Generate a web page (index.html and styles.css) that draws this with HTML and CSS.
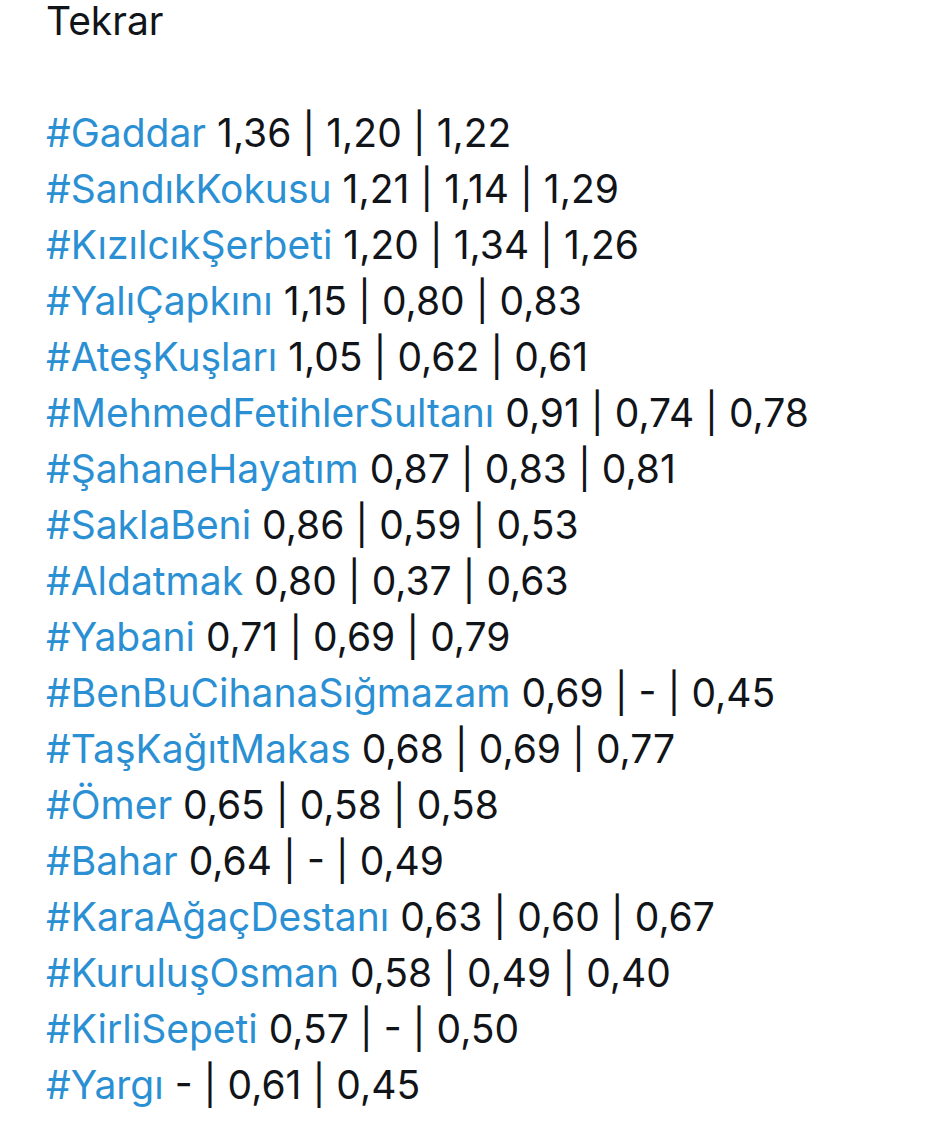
FILE: index.html
```html
<!DOCTYPE html>
<html lang="tr">
<head>
<meta charset="utf-8">
<link rel="stylesheet" href="styles.css">
</head>
<body>
<div class="tweet">
  <div class="line title">Tekrar</div>
  <div class="line blank">&nbsp;</div>
  <div class="line"><span class="tag">#Gaddar</span> 1,36 | 1,20 | 1,22</div>
  <div class="line"><span class="tag">#SandıkKokusu</span> 1,21 | 1,14 | 1,29</div>
  <div class="line"><span class="tag">#KızılcıkŞerbeti</span> 1,20 | 1,34 | 1,26</div>
  <div class="line"><span class="tag">#YalıÇapkını</span> 1,15 | 0,80 | 0,83</div>
  <div class="line"><span class="tag">#AteşKuşları</span> 1,05 | 0,62 | 0,61</div>
  <div class="line"><span class="tag">#MehmedFetihlerSultanı</span> 0,91 | 0,74 | 0,78</div>
  <div class="line"><span class="tag">#ŞahaneHayatım</span> 0,87 | 0,83 | 0,81</div>
  <div class="line"><span class="tag">#SaklaBeni</span> 0,86 | 0,59 | 0,53</div>
  <div class="line"><span class="tag">#Aldatmak</span> 0,80 | 0,37 | 0,63</div>
  <div class="line"><span class="tag">#Yabani</span> 0,71 | 0,69 | 0,79</div>
  <div class="line"><span class="tag">#BenBuCihanaSığmazam</span> 0,69 | - | 0,45</div>
  <div class="line"><span class="tag">#TaşKağıtMakas</span> 0,68 | 0,69 | 0,77</div>
  <div class="line"><span class="tag">#Ömer</span> 0,65 | 0,58 | 0,58</div>
  <div class="line"><span class="tag">#Bahar</span> 0,64 | - | 0,49</div>
  <div class="line"><span class="tag">#KaraAğaçDestanı</span> 0,63 | 0,60 | 0,67</div>
  <div class="line"><span class="tag">#KuruluşOsman</span> 0,58 | 0,49 | 0,40</div>
  <div class="line"><span class="tag">#KirliSepeti</span> 0,57 | - | 0,50</div>
  <div class="line"><span class="tag">#Yargı</span> - | 0,61 | 0,45</div>
</div>
</body>
</html>
```
FILE: styles.css
```css
html, body {
  margin: 0;
  padding: 0;
  background: #ffffff;
}
body {
  overflow: hidden;
}
.tweet {
  padding-left: 46px;
  font-family: Inter, "Liberation Sans", Arial, sans-serif;
  font-size: 39px;
  line-height: 56px;
  color: #111418;
}
.line {
  white-space: nowrap;
}
.title {
  line-height: 42px;
  margin-bottom: 7px;
}
.tag {
  color: #2b90d3;
}
```
